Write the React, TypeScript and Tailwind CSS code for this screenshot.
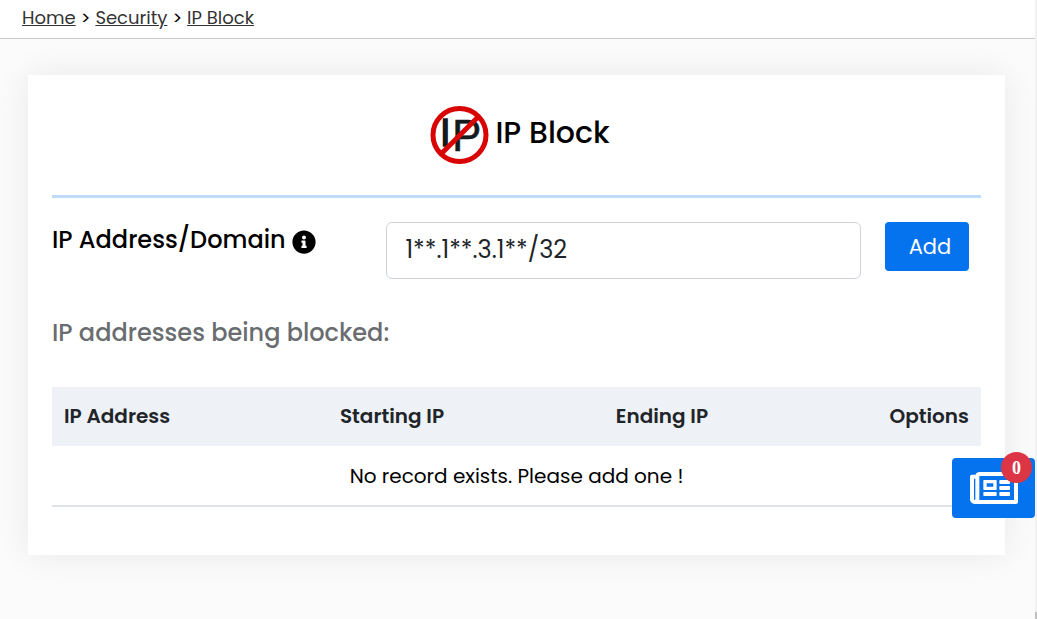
import React from "react";
import { FaInfoCircle, FaRegNewspaper } from "react-icons/fa";

const crumbs = [
  { label: "Home", url: "#home" },
  { label: "Security", url: "#security" },
  { label: "IP Block", url: "#ip-block" },
];

const BlockLogo = () => (
  <svg viewBox="0 0 72 72" className="w-18 h-18 shrink-0" aria-hidden="true">
    <g
      fill="#151a1c"
      stroke="#151a1c"
      fontFamily="Liberation Sans, sans-serif"
    >
      <text x="17" y="47" fontSize="38" strokeWidth="1.5">
        I
      </text>
      <text x="29" y="52" fontSize="44" strokeWidth="0.5">
        P
      </text>
    </g>
    <circle cx="36.5" cy="36" r="26.5" fill="none" stroke="#d90404" strokeWidth="5" />
    <path d="M18 55 55 18" stroke="#d90404" strokeWidth="5" />
  </svg>
);

const Breadcrumb = () => (
  <nav className="flex items-center gap-[5px] h-[39px] pl-[22px] pb-[2px] bg-white border-b border-[#c8c8c8] text-lg text-black">
    {crumbs.map((crumb, i) => (
      <React.Fragment key={crumb.label}>
        {i > 0 && <span>&gt;</span>}
        <a href={crumb.url} className="underline text-[#333333]">
          {crumb.label}
        </a>
      </React.Fragment>
    ))}
  </nav>
);

const BlockForm = () => (
  <form className="flex items-start pt-6" onSubmit={(e) => e.preventDefault()}>
    <div className="w-[36%] shrink-0 flex items-center gap-1.5 pt-0.5 text-2xl font-medium text-black">
      <label htmlFor="ip">IP Address/Domain</label>
      <FaInfoCircle className="mt-1" />
    </div>
    <input
      id="ip"
      type="text"
      defaultValue="1**.1**.3.1**/32"
      className="flex-1 min-w-0 h-[57px] px-[18px] pb-0.5 bg-white border border-[#ced4da] rounded-md text-2xl text-[#212529]"
    />
    <button
      type="submit"
      className="ml-6 mr-3 w-[84px] h-[49px] pl-1.5 rounded bg-[#0572ee] text-white text-[21px]"
    >
      Add
    </button>
  </form>
);

const BlockTable = () => (
  <table className="w-full table-fixed text-black">
    <thead className="bg-[#eef1f6] text-[#212529] text-xl">
      <tr className="h-[59px] text-left">
        <th className="px-3 pb-0.5 font-semibold w-[29.7%]">IP Address</th>
        <th className="px-3 pb-0.5 font-semibold w-[29.7%]">Starting IP</th>
        <th className="px-3 pb-0.5 font-semibold">Ending IP</th>
        <th className="px-3 pb-0.5 font-semibold text-right">Options</th>
      </tr>
    </thead>
    <tbody>
      <tr className="h-[60px] border-b-2 border-[#dee2e6]">
        <td colSpan={4} className="text-center text-xl">
          No record exists. Please add one !
        </td>
      </tr>
    </tbody>
  </table>
);

const NewsButton = () => (
  <button
    type="button"
    aria-label="News"
    className="fixed right-[2px] top-[458px] w-[83px] h-[60px] flex items-center justify-center rounded bg-[#0572ee] text-white"
  >
    <FaRegNewspaper className="text-5xl" />
    <span className="absolute right-[3px] -top-1.5 w-[31px] h-[31px] flex items-center justify-center rounded-full bg-[#dc3545] font-['Liberation_Serif',serif] font-bold text-lg">
      0
    </span>
  </button>
);

export default function App() {
  return (
    <div className="flex min-h-screen font-['Poppins','Inter',sans-serif]">
      <div className="flex-1 min-w-0 bg-[#fbfbfb]">
        <Breadcrumb />
        <main className="mt-9 ml-7 mr-[30px] px-6 pb-12 bg-white shadow-[0_0_32px_rgba(0,0,0,0.08)]">
          <div className="flex items-center justify-center h-[123px] border-b-3 border-[#bfdcfb]">
            <BlockLogo />
            <h1 className="pb-1 text-3xl font-medium text-black">IP Block</h1>
          </div>
          <BlockForm />
          <h2 className="mt-[38px] mb-[38px] text-2xl font-medium text-[#6a6d70]">
            IP addresses being blocked:
          </h2>
          <BlockTable />
        </main>
      </div>
      <div className="w-[2px] flex items-end bg-[#f1f1f1]">
        <div className="w-full h-[7px] bg-[#c1c1c1]" />
      </div>
      <NewsButton />
    </div>
  );
}
